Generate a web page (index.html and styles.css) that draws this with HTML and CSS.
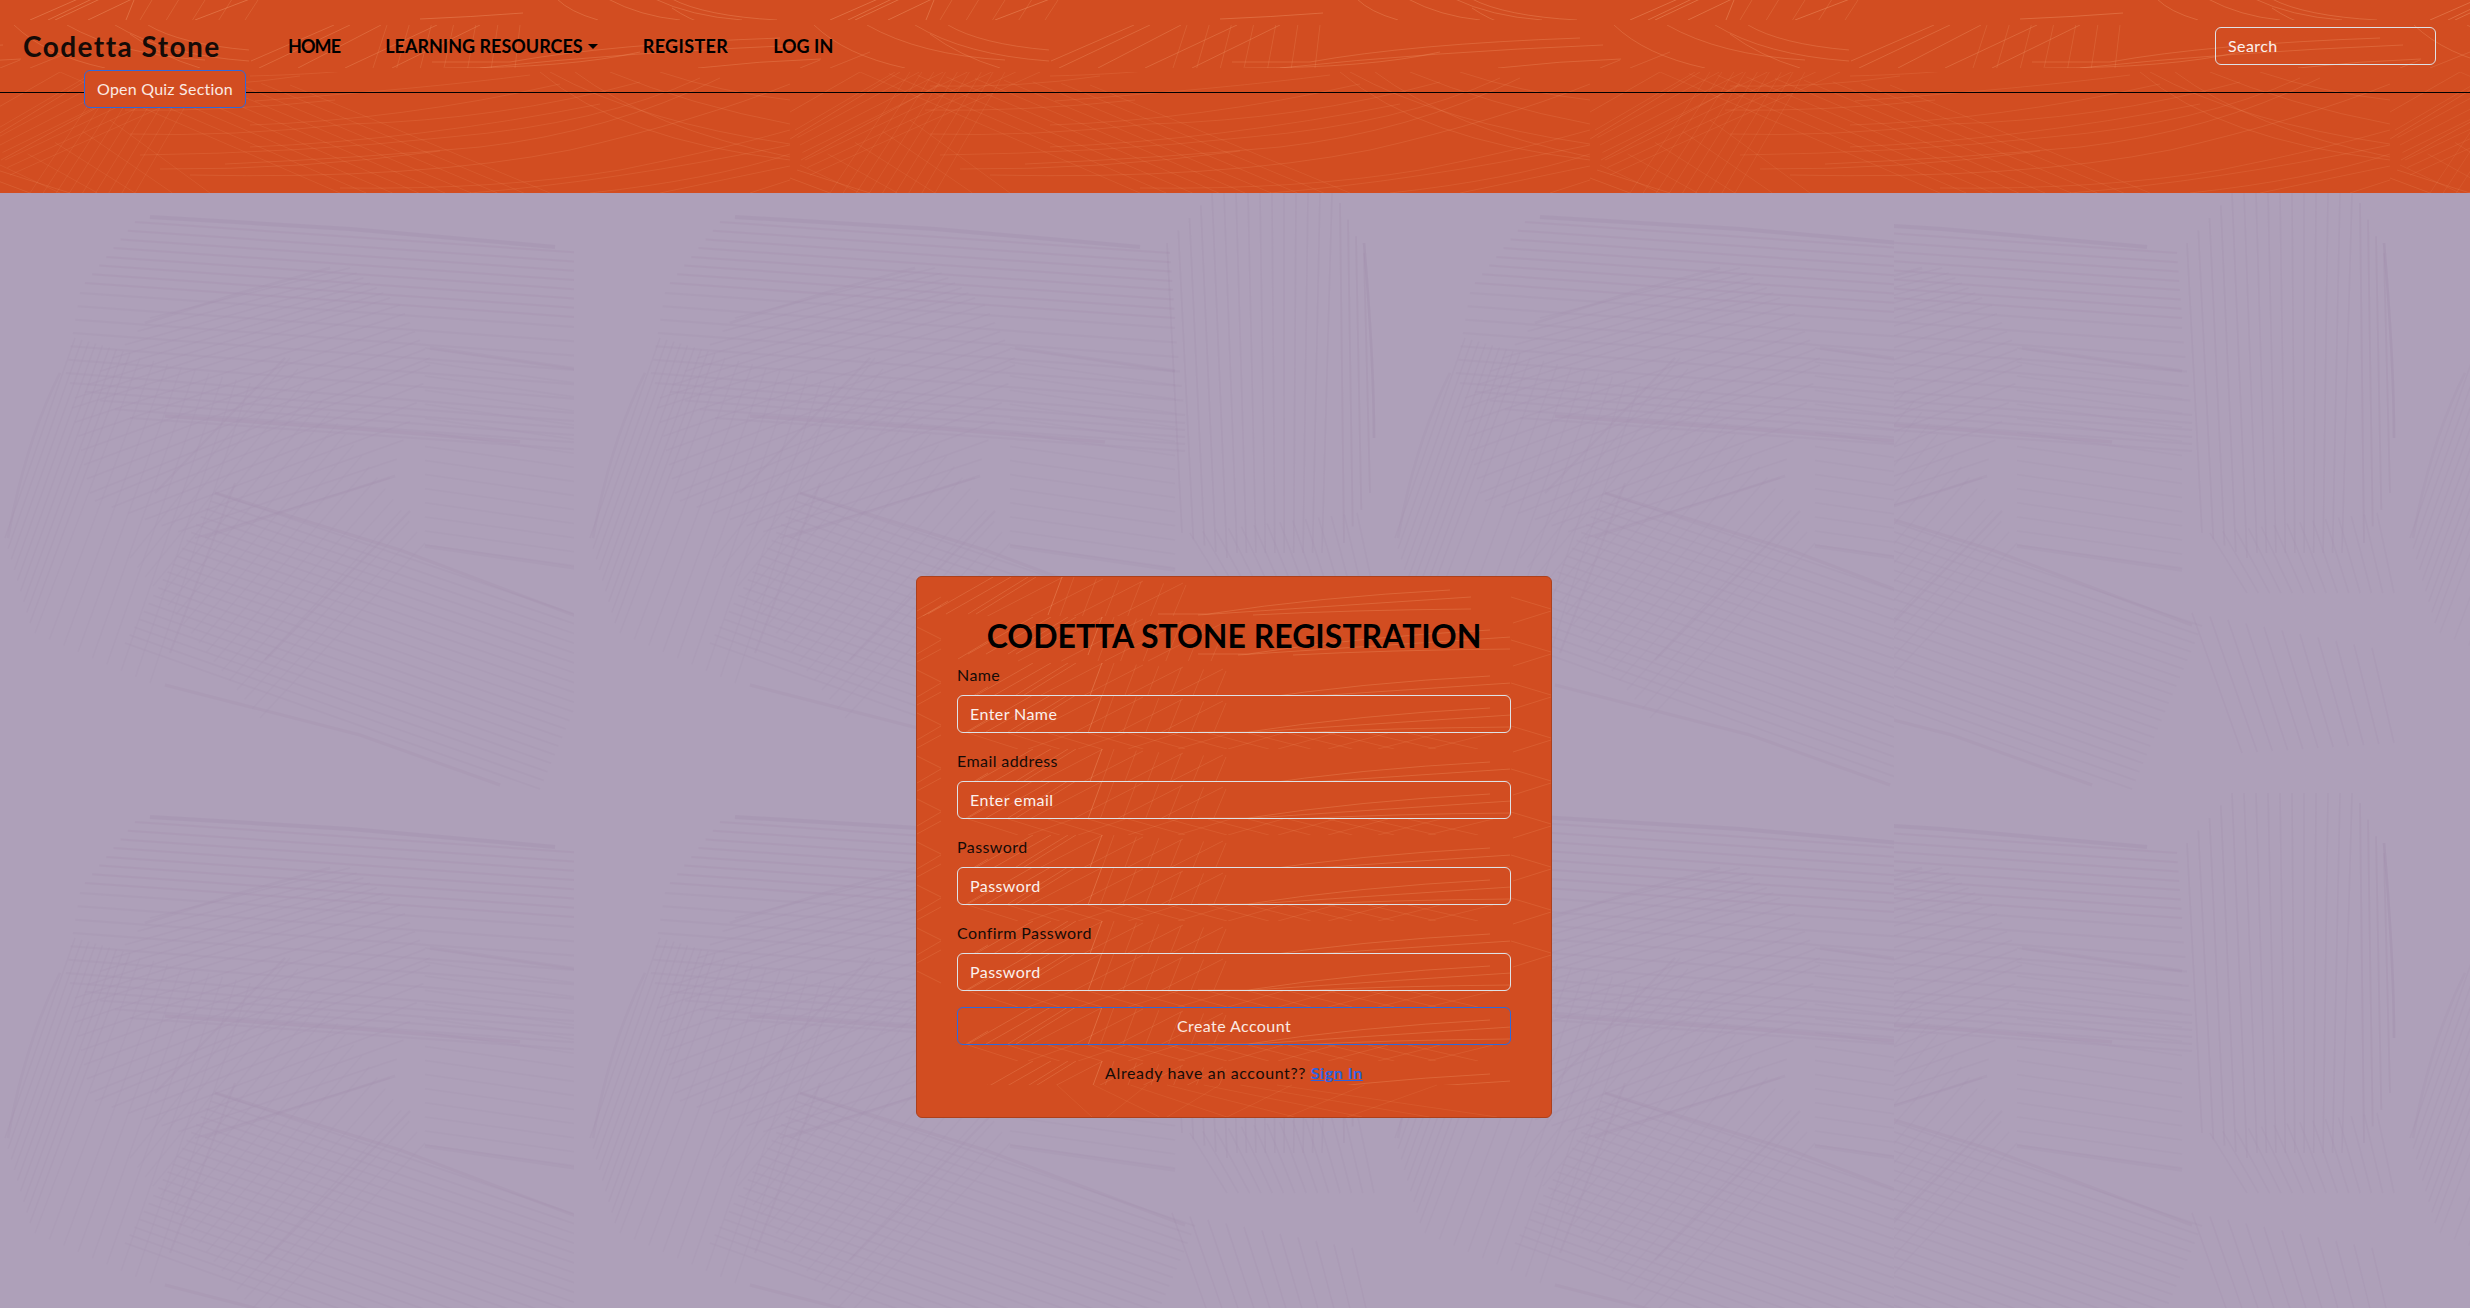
FILE: index.html
```html
<!DOCTYPE html>
<html lang="en">
<head>
<meta charset="utf-8">
<title>Codetta Stone</title>
<link rel="stylesheet" href="styles.css">
</head>
<body>
<header class="masthead">
  <svg class="texture" id="header-texture" aria-hidden="true"></svg>
  <nav class="navbar">
    <a class="brand" href="#">Codetta Stone</a>
    <div class="links">
      <a class="link home" href="#">HOME</a>
      <a class="link resources" href="#">LEARNING RESOURCES<i class="caret"></i></a>
      <a class="link register" href="#">REGISTER</a>
      <a class="link login" href="#">LOG IN</a>
    </div>
    <input class="field search" type="text" placeholder="Search">
  </nav>
  <button class="btn quiz">Open Quiz Section</button>
</header>
<main class="page">
  <svg class="texture" id="page-texture" aria-hidden="true"></svg>
  <section class="card">
    <svg class="texture" id="card-texture" aria-hidden="true"></svg>
    <h1 class="title">CODETTA STONE REGISTRATION</h1>
    <form class="form">
      <label class="label" for="name">Name</label>
      <input class="field" id="name" type="text" placeholder="Enter Name">
      <label class="label" for="email">Email address</label>
      <input class="field" id="email" type="email" placeholder="Enter email">
      <label class="label" for="pw">Password</label>
      <input class="field" id="pw" type="password" placeholder="Password">
      <label class="label" for="pw2">Confirm Password</label>
      <input class="field" id="pw2" type="password" placeholder="Password">
      <button class="btn create" type="button">Create Account</button>
      <p class="signin">Already have an account?? <a class="signin-link" href="#">Sign In</a></p>
    </form>
  </section>
</main>
<script src="texture.js"></script>
</body>
</html>
```
FILE: styles.css
```css
* { box-sizing: border-box; }
body {
  margin: 0;
  height: 1308px;
  display: flex;
  flex-direction: column;
  overflow: hidden;
  background: #aea0b9;
  color: #150b07;
  font: 400 16px/24px Lato, sans-serif;
  letter-spacing: .42px;
}
.texture {
  position: absolute;
  inset: 0;
  width: 100%;
  height: 100%;
  z-index: -1;
  fill: none;
}
.masthead {
  position: relative;
  z-index: 1;
  height: 193px;
  background: #d24d21;
}
.navbar {
  height: 93px;
  padding: 0 34px 0 23px;
  display: flex;
  align-items: center;
  border-bottom: 1px solid #000;
}
.brand {
  width: 195px;
  margin-right: 70px;
  color: #150b07;
  font-size: 28px;
  font-weight: 700;
  line-height: 36px;
  letter-spacing: 1.45px;
  text-decoration: none;
  white-space: nowrap;
}
.links { display: flex; flex: 1; gap: 45px; letter-spacing: 0; }
.link {
  display: flex;
  align-items: center;
  color: #000;
  font-size: 18px;
  font-weight: 700;
  text-decoration: none;
  white-space: nowrap;
}
.home { letter-spacing: -.9px; }
.register { letter-spacing: .35px; }
.caret {
  margin-left: 5px;
  border: 5px solid transparent;
  border-top-color: #000;
  border-bottom: 0;
}
.field {
  display: block;
  width: 100%;
  height: 38px;
  padding: 5px 12px 7px;
  border: 1px solid #dee2e6;
  border-radius: 6px;
  background: transparent;
  color: #fff;
  font: inherit;
  letter-spacing: inherit;
}
.field::placeholder { color: #fff; opacity: .92; }
.search { width: 221px; }
.btn {
  height: 38px;
  border: 1px solid #2e69dc;
  border-radius: 6px;
  background: transparent;
  color: #fbeae3;
  font: inherit;
  letter-spacing: inherit;
}
.quiz {
  position: absolute;
  left: 84px;
  top: 70px;
  width: 162px;
  padding: 0;
  background: #d24d21;
  letter-spacing: .22px;
}
.page {
  position: relative;
  z-index: 0;
  flex: 1;
  display: flex;
  justify-content: center;
  align-items: flex-start;
  padding: 383px 2px 0 0;
}
.card {
  position: relative;
  z-index: 0;
  width: 636px;
  height: 542px;
  padding: 40px;
  border: 1px solid #ac401c;
  border-radius: 6px;
  background: #d24d21;
}
.title {
  margin: 0 0 8px;
  color: #000;
  font-size: 32px;
  line-height: 38px;
  letter-spacing: 0;
  text-align: center;
  white-space: nowrap;
}
.form { display: flex; flex-direction: column; }
.label { margin-bottom: 8px; }
.form .field { margin-bottom: 16px; }
.signin { margin: 16px 0 0; text-align: center; letter-spacing: .62px; }
.signin-link { color: #2b62e0; font-weight: 700; }
```
FILE: texture.js
```js
const NS = 'http://www.w3.org/2000/svg';

function add(parent, tag, attrs) {
  const el = document.createElementNS(NS, tag);
  for (const key in attrs) el.setAttribute(key, attrs[key]);
  parent.appendChild(el);
  return el;
}

// n strokes that blend from stroke a to stroke b; each is [x1, y1, x2, y2]
function fan(a, b, n) {
  let d = '';
  for (let i = 0; i < n; i++) {
    const p = a.map((v, k) => (v + (b[k] - v) * i / Math.max(1, n - 1)).toFixed(1));
    d += `M${p[0]} ${p[1]}L${p[2]} ${p[3]}`;
  }
  return d;
}

function clipped(svg, id, x, y, w, h, opacity = 1) {
  const clip = add(svg, 'clipPath', { id });
  add(clip, 'rect', { x, y, width: w, height: h });
  return add(svg, 'g', { 'clip-path': `url(#${id})`, opacity });
}

// Lavender brush strokes behind the page; rows repeat every 600px
const page = document.getElementById('page-texture');
const weave = [
  ['M150 24L350 36L555 54', 4, .4],
  [fan([135, 29, 585, 60], [85, 90, 590, 125], 8), 2, .3],
  [fan([80, 100, 590, 135], [66, 180, 600, 222], 7), 2, .22],
  [fan([70, 190, 600, 230], [130, 225, 600, 258], 5), 2, .2],
  ['M165 223L360 236L520 249', 3.5, .3],
  [fan([150, 125, 350, 75], [75, 205, 390, 105], 7), 1.5, .2],
  [fan([72, 215, 400, 112], [90, 300, 430, 165], 7), 1.5, .2],
  [fan([95, 308, 430, 172], [195, 345, 390, 285], 7), 1.5, .2],
  ['M145 130L240 100L330 75M205 344L395 283', 2.5, .25],
  [fan([5, 345, 75, 145], [30, 430, 130, 160], 9), 1.3, .25],
  [fan([35, 440, 140, 165], [150, 490, 250, 190], 9), 1.3, .18],
  ['M8 345Q25 250 60 180', 2.5, .25],
  [fan([130, 365, 290, 165], [260, 525, 425, 350], 18), 1.3, .17],
  ['M155 300L285 165M265 467L410 318M235 290L170 460', 2, .25],
  [fan([425, 155, 590, 178], [425, 352, 590, 375], 15), 1.5, .18],
  ['M430 155L590 178M425 353L590 377', 3.5, .22],
  [fan([215, 300, 610, 433], [125, 450, 540, 596], 20), 1.6, .22],
  ['M215 300L400 357L600 432M165 492L360 542L500 592', 3, .28]
];
const bands = [
  [fan([5, 50, 20, 340], [50, 0, 65, 365], 5), 1.5, .25],
  [fan([62, 0, 75, 360], [170, 0, 160, 360], 10), 1.5, .22],
  [fan([178, 10, 182, 350], [202, 60, 208, 300], 4), 1.7, .28],
  ['M202 50Q212 170 212 245', 2.5, .4],
  [fan([28, 340, 65, 400], [195, 320, 212, 400], 14), 1.4, .18],
  [fan([10, 420, 60, 560], [190, 455, 212, 550], 11), 1.4, .2]
];
function strokes(g, set, color) {
  for (const [d, width, opacity] of set)
    add(g, 'path', { d, stroke: color, 'stroke-width': width, 'stroke-opacity': opacity });
}
for (let row = 0; row < 2; row++) {
  const y = row * 600;
  [[0, 0, 574], [585, 574, 710], [1390, 1375, 519], [1592, 1894, 345], [2405, 2395, 75]].forEach(([dx, x, w], i) => {
    const g = clipped(page, `weave${row}-${i}`, x, y, w, 600, .42);
    strokes(add(g, 'g', { transform: `translate(${dx} ${y})` }), weave, '#977a9f');
  });
  for (const x of [1162, 2182])
    strokes(add(page, 'g', { transform: `translate(${x} ${y})`, opacity: .5 }), bands, '#977a9f');
}

// Orange scratches of the header; tiles repeat every 800px
const head = document.getElementById('header-texture');
const topStrip = [
  ['M30 20L78 -1M48 20L92 -1M55 20L100 -1M88 20L132 -1M126 20L134 0M195 20L250 -1', 1, .5],
  [fan([140, 20, 152, 0], [245, 20, 258, 0], 5), 1, .28],
  ['M420 19Q470 17 523 13', 1, .45],
  ['M557 -1Q570 12 598 20M608 -1Q640 16 680 20M672 -1Q705 16 777 20M655 -1Q690 16 742 20M672 8Q690 20 705 24', 1, .4]
];
const midStrip = [
  ['M251 61L334 25M259 68L350 25M298 68L381 25M345 68L437 25M392 68L480 25', 1, .42],
  [fan([373, 68, 387, 25], [515, 68, 520, 25], 7), 1, .28],
  ['M432 62H510Q610 44 780 38M480 68Q630 52 803 45M445 68Q570 68 640 52M698 68Q760 61 821 59', 1, .38],
  ['M14 25Q45 55 105 68M67 25Q120 55 205 60M148 25Q180 44 249 50M115 25Q165 55 249 61M130 34Q160 56 200 68', 1, .38],
  ['M0 68L20 60M30 68L70 52', 1, .3]
];
const lowStrip = [
  [fan([30, 193, 110, 72], [135, 193, 205, 72], 9), 1, .22],
  [fan([-5, 130, 95, 72], [10, 175, 240, 72], 7), 1, .25],
  [fan([60, 72, 340, 193], [290, 85, 550, 193], 9), 1, .23],
  [fan([0, 165, 60, 193], [110, 120, 210, 193], 5), 1, .22],
  ['M250 76Q330 74 370 68M130 86Q220 88 300 76M255 101Q430 88 530 75M125 110Q220 112 335 100M250 125Q400 120 560 84', 1, .27],
  ['M130 134Q230 137 350 124Q500 120 640 82M250 147Q420 140 600 104M140 155Q300 153 450 137Q600 124 700 78', 1, .27],
  ['M225 164Q360 158 480 147Q610 132 720 78M160 169Q300 170 440 151M190 175Q420 180 570 150Q700 120 790 84', 1, .3],
  ['M340 188Q500 190 620 170Q720 150 790 130M470 193Q610 182 790 145M590 193Q710 180 790 154M660 193L790 166M750 193L790 180', 1, .27],
  ['M540 72Q620 140 790 160M575 72Q650 128 790 157M550 72Q640 122 790 144M610 72Q690 105 790 124M660 72Q720 92 790 100', 1, .29],
  ['M790 112L860 72M790 139L900 72M801 160L940 84M797 170L870 193M790 178L830 193', 1, .3]
];
for (let k = -1; k < 4; k++) {
  [[topStrip, 0, 20, .8], [midStrip, 25, 43, .75], [lowStrip, 72, 121, .6]].forEach(([set, y, h, opacity], i) => {
    const g = clipped(head, `head${k + 1}-${i}`, 0, y, 2470, h, opacity);
    strokes(add(g, 'g', { transform: `translate(${k * 800} 0)` }), set, '#f6a070');
  });
}

// Card scratches: a separate tile starts at the title and at every form row
const card = document.getElementById('card-texture');
const scratch = [
  ['M10 37L75 0M28 37L93 0M50 37L110 0M58 37L118 0M-5 45L30 24', 1, .32],
  ['M130 38L144 0', 1, .45],
  [fan([140, 44, 156, 0], [253, 44, 268, 8], 6), 1, .22],
  [fan([60, 44, 145, 0], [190, 44, 265, 6], 4), 1, .24],
  ['M240 37H290Q400 20 532 13M280 38Q400 30 553 20M335 38Q430 33 553 32', 1, .34]
];
const under = [
  [fan([10, 0, 60, 16], [450, 0, 520, 16], 12), 1, .16],
  [fan([70, 16, 115, 0], [470, 16, 535, 0], 9), 1, .16]
];
const tiles = [[1, 0, 632, 39], [41, 40, 552, 46]];
for (let i = 0; i < 4; i++) tiles.push([41, 86 + i * 86, 552, 32], [41, 118 + i * 86, 552, 38]);
tiles.push([41, 430, 552, 38], [41, 484, 552, 24]);
tiles.forEach(([x, y, w, h], i) => {
  const g = clipped(card, `tile${i}`, x, y, w, h, .85);
  strokes(add(g, 'g', { transform: `translate(${x} ${y})` }), scratch, '#f6a070');
});
[156, 242, 328, 414, 468].forEach((y, i) => {
  const g = clipped(card, `under${i}`, 41, y, 552, 16);
  strokes(add(g, 'g', { transform: `translate(41 ${y})` }), under, '#f6a070');
});
for (let y = 20; y < 400; y += 43)
  add(card, 'path', { d: `M0 ${y + 14}L24 ${y}M0 ${y + 22}L24 ${y + 9}M0 ${y + 30}L24 ${y + 42}M594 ${y}L634 ${y + 12}M596 ${y + 26}L634 ${y + 14}`, stroke: '#f6a070', 'stroke-opacity': .2 });
add(card, 'path', { d: fan([140, 508, 175, 540], [360, 508, 580, 540], 7) + fan([190, 540, 230, 508], [430, 540, 520, 508], 5), stroke: '#f6a070', 'stroke-opacity': .13 });
```
